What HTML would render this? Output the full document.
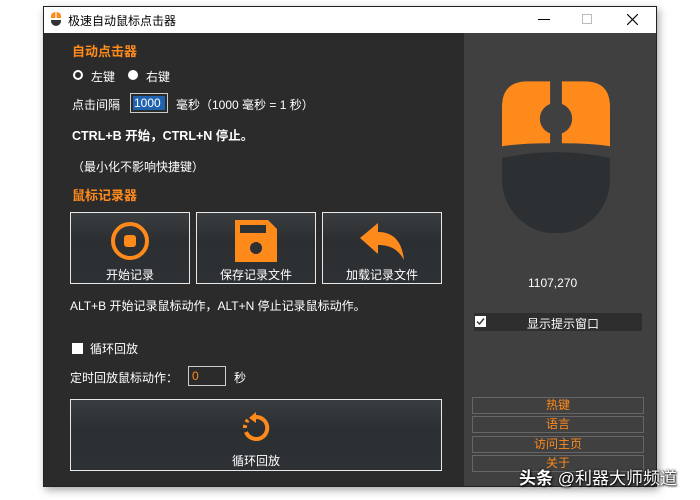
<!DOCTYPE html>
<html><head><meta charset="utf-8"><style>
*{margin:0;padding:0;box-sizing:border-box}
body{width:700px;height:500px;background:#fff;position:relative;overflow:hidden;font-family:"Liberation Sans","Noto Sans CJK SC",sans-serif;font-size:12px;color:#fff}
.win{position:absolute;left:43px;top:6px;width:614px;height:481px;border:1px solid #222;box-shadow:2px 3px 8px rgba(0,0,0,.35);background:#2b2b2b}
.title{position:absolute;left:0;top:0;width:612px;height:26px;background:#fff;color:#000;font-size:12px}
.right{position:absolute;left:420px;top:26px;width:192px;height:453px;background:#404040}
.a{position:absolute;white-space:nowrap}
.or{color:#ff8a1c;font-weight:bold;font-size:13px}
.btn{position:absolute;border:1px solid #e8e8e8;background:linear-gradient(#3a3d40,#2c2f32 40%,#2d3134);text-align:center}
.lb{position:absolute;left:428px;width:172px;height:17px;border:1px solid #666;color:#ff8a1c;text-align:center;font-size:12px;line-height:15px}
</style></head><body>
<div class="win">
<div class="title">
<svg class="a" style="left:6px;top:5px" width="12" height="14" viewBox="0 0 12 14"><path d="M1 6V4a5 4 0 0 1 10 0v2z" fill="#ff8a1c"/><path d="M1 8h10v1a5 5 0 0 1-10 0z" fill="#333"/><rect x="5.4" y="0" width="1.2" height="6" fill="#fff"/></svg>
<div class="a" style="left:24px;top:5px">极速自动鼠标点击器</div>
<div class="a" style="left:494px;top:12px;width:12px;height:1px;background:#000"></div>
<div class="a" style="left:538px;top:7px;width:10px;height:10px;border:1px solid #bbb"></div>
<svg class="a" style="left:583px;top:7px" width="11" height="11" viewBox="0 0 11 11"><path d="M0 0L11 11M11 0L0 11" stroke="#111" stroke-width="1.2"/></svg>
</div>
<div class="right"></div>
<div class="a or" style="left:28px;top:34px">自动点击器</div>
<div class="a" style="left:29px;top:63px;width:10px;height:10px;border:2px solid #fff;border-radius:50%"></div>
<div class="a" style="left:47px;top:61px">左键</div>
<div class="a" style="left:84px;top:63px;width:10px;height:10px;background:#fff;border-radius:50%"></div>
<div class="a" style="left:102px;top:61px">右键</div>
<div class="a" style="left:28px;top:89px">点击间隔</div>
<div class="a" style="left:86px;top:86px;width:38px;height:20px;border:1px solid #ccc;background:#2b2b2b"><div style="margin:2px;background:#1e62b0;height:14px;line-height:14px;padding-left:1px">1000</div></div>
<div class="a" style="left:132px;top:89px">毫秒（1000 毫秒 = 1 秒）</div>
<div class="a" style="left:28px;top:118px;font-weight:bold;font-size:12.5px">CTRL+B 开始，CTRL+N 停止。</div>
<div class="a" style="left:28px;top:151px">（最小化不影响快捷键）</div>
<div class="a or" style="left:28px;top:178px">鼠标记录器</div>
<div class="btn" style="left:26px;top:205px;width:120px;height:72px">
<svg style="margin-top:8px" width="40" height="40" viewBox="0 0 40 40"><circle cx="20" cy="20" r="17" fill="none" stroke="#ff8a1c" stroke-width="4"/><rect x="14" y="14" width="12" height="12" rx="3" fill="#ff8a1c"/></svg>
<div style="margin-top:2px">开始记录</div></div>
<div class="btn" style="left:152px;top:205px;width:120px;height:72px">
<svg style="margin-top:7px" width="42" height="42" viewBox="0 0 42 42"><path d="M0 0h33l9 9v33H0z" fill="#ff8a1c"/><rect x="5" y="5" width="26" height="8" fill="#2d3033"/><circle cx="21" cy="28" r="6" fill="#2d3033"/></svg>
<div style="margin-top:1px">保存记录文件</div></div>
<div class="btn" style="left:278px;top:205px;width:120px;height:72px">
<svg style="margin-top:8px" width="44" height="40" viewBox="0 0 44 40"><path d="M0 17L18 2v9c16 0 24 10 26 28C38 28 30 24 18 24v9z" fill="#ff8a1c"/></svg>
<div style="margin-top:2px">加载记录文件</div></div>
<div class="a" style="left:26px;top:290px">ALT+B 开始记录鼠标动作，ALT+N 停止记录鼠标动作。</div>
<div class="a" style="left:28px;top:336px;width:11px;height:11px;background:#fff"></div>
<div class="a" style="left:46px;top:333px">循环回放</div>
<div class="a" style="left:26px;top:362px">定时回放鼠标动作：</div>
<div class="a" style="left:144px;top:359px;width:38px;height:20px;border:1px solid #ccc;color:#ff8a1c;padding:2px 3px">0</div>
<div class="a" style="left:190px;top:362px">秒</div>
<div class="btn" style="left:26px;top:392px;width:372px;height:72px">
<svg style="margin-top:12px" width="32" height="32" viewBox="0 0 32 32"><path d="M16 5a11 11 0 1 1-10 15" fill="none" stroke="#ff8a1c" stroke-width="4"/><path d="M16 0v11l-7-5z" fill="#ff8a1c"/><path d="M5 16a11 11 0 0 1 3-8" fill="none" stroke="#ff8a1c" stroke-width="4" stroke-dasharray="3 3"/></svg>
<div style="margin-top:5px">循环回放</div></div>
<svg class="a" style="left:458px;top:74px" width="108" height="152" viewBox="0 0 110 154"><path d="M0 66V26Q0 0 26 0h23v23a16 16 0 0 0 0 30v10Q20 63 0 66z" fill="#ff8a1c"/><path d="M110 66V26Q110 0 84 0H61v23a16 16 0 0 1 0 30v10Q90 63 110 66z" fill="#ff8a1c"/><path d="M0 78Q55 66 110 78v22a55 55 0 0 1-110 0z" fill="#2d3033"/></svg>
<div class="a" style="left:484px;top:269px">1107,270</div>
<div class="a" style="left:430px;top:306px;width:168px;height:18px;background:#2e2e2e"></div>
<div class="a" style="left:431px;top:309px;width:11px;height:11px;background:#fff"><svg width="11" height="11" viewBox="0 0 11 11" style="display:block"><path d="M2 5.5L4.5 8L9 2.5" fill="none" stroke="#333" stroke-width="1.4"/></svg></div>
<div class="a" style="left:483px;top:308px">显示提示窗口</div>
<div class="lb" style="top:390px">热键</div>
<div class="lb" style="top:409px">语言</div>
<div class="lb" style="top:429px">访问主页</div>
<div class="lb" style="top:448px">关于</div>
</div>
<div class="a" style="left:519px;top:464px;font-size:17px;color:#fff;text-shadow:0 0 2px #000,1px 1px 2px #000"><b>头条</b> @利器大师频道</div>
</body></html>
